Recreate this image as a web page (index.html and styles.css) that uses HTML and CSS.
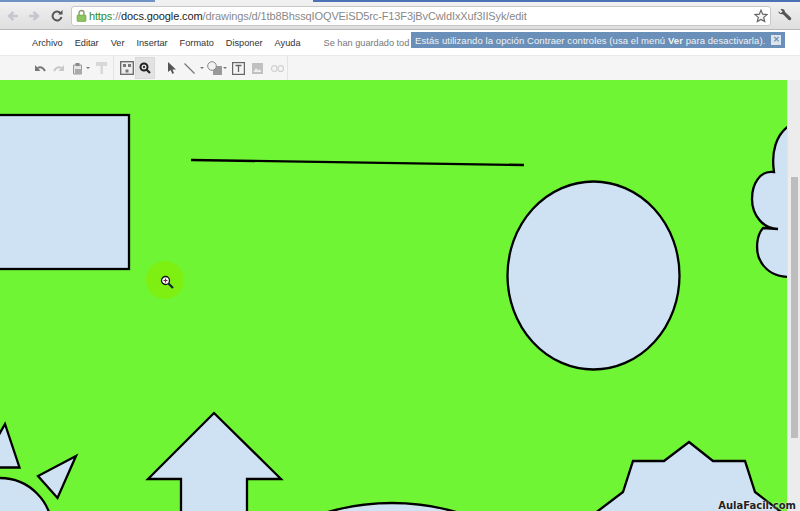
FILE: index.html
```html
<!doctype html>
<html lang="es">
    <head>
        <meta charset="UTF-8" />
        <meta name="viewport" content="width=device-width, initial-scale=1.0" />
        <title>Google Drawings</title>
        <link rel="stylesheet" href="styles.css">
    </head>
    <body>
        <div class="tabstrip">
            <div class="tab-dark tab-left"></div>
            <div class="tab-light"></div>
            <div class="tab-dark"></div>
        </div>

        <div class="browserbar">
            <svg class="nav-icon" width="12" height="12" viewBox="0 0 12 12"><path d="M11 6H3M6.5 2 2 6l4.5 4" fill="none" stroke="#c4c8cc" stroke-width="2.4"/></svg>
            <svg class="nav-icon nav-forward" width="12" height="12" viewBox="0 0 12 12"><path d="M1 6h8M5.5 2 10 6l-4.5 4" fill="none" stroke="#c4c8cc" stroke-width="2.4"/></svg>
            <svg class="nav-icon nav-reload" width="12" height="12" viewBox="0 0 12 12"><path d="M9.8 3.4A4.5 4.5 0 1 0 10.5 7" fill="none" stroke="#555" stroke-width="2"/><path d="M7 4.6h4.6V0z" fill="#555"/></svg>
            <div class="omnibox">
                <svg width="11" height="13" viewBox="0 0 11 13"><path d="M3 6V4a2.500 2.500 0 0 1 5 0v2" fill="none" stroke="#8a9a70" stroke-width="1.400"/><rect x="1" y="6" width="9" height="6.500" rx="1" fill="#8cc45e" stroke="#6d9a45" stroke-width=".6"/></svg>
                <span class="url"><span class="url-https">https</span><span class="url-path">://</span><span class="url-host">docs.google.com</span><span class="url-path">/drawings/d/1tb8BhssqIOQVEiSD5rc-F13F3jBvCwldIxXuf3IISyk/edit</span></span>
                <svg class="star" width="14" height="14" viewBox="0 0 14 14"><path d="M7 1.200 8.700 5.200l4.300.4-3.300 2.800 1 4.200L7 10.400 3.300 12.600l1-4.200L1 5.600l4.300-.4z" fill="#f4f4f4" stroke="#666" stroke-width="1.200"/></svg>
            </div>
            <svg class="wrench" width="15" height="15" viewBox="0 0 15 15"><path d="M1.500 3.200 3.800 5.300 5.600 3.600 3.500 1.400C5.500.3 8 1.600 8 4l5.800 5.500a1.500 1.500 0 0 1-2.300 2.300L6 6.200C3.500 6.500 1 5.500 1.500 3.200z" fill="#555"/></svg>
        </div>

        <div class="menubar">
            <span class="menu-item">Archivo</span>
            <span class="menu-item">Editar</span>
            <span class="menu-item">Ver</span>
            <span class="menu-item">Insertar</span>
            <span class="menu-item">Formato</span>
            <span class="menu-item">Disponer</span>
            <span class="menu-item">Ayuda</span>
            <span class="save-status">Se han guardado tod</span>
        </div>

        <div class="notice">
            <span>Estás utilizando la opción Contraer controles (usa el menú <b>Ver</b> para desactivarla).</span>
            <span class="notice-close">✕</span>
        </div>

        <div class="toolbar">
            <svg class="tool tool-undo" width="12" height="10" viewBox="0 0 12 10"><path d="M11 8C9 4 6 3.500 3.500 5" fill="none" stroke="#777" stroke-width="2"/><path d="M1 2v6h5.500z" fill="#777"/></svg>
            <svg class="tool tool-redo" width="12" height="10" viewBox="0 0 12 10"><path d="M1 8c2-4 5-4.500 7.500-3" fill="none" stroke="#c8c8c8" stroke-width="2"/><path d="M11 2v6H5.500z" fill="#c8c8c8"/></svg>
            <svg class="tool tool-paste" width="11" height="13" viewBox="0 0 11 13"><path d="M1.500 3h8v9h-8z" fill="#e4e4e4" stroke="#999"/><rect x="3.500" y="1" width="4" height="3" fill="#888"/><rect x="3" y="7" width="7" height="5" fill="#aaa"/></svg>
            <span class="caret"></span>
            <svg class="tool tool-roller" width="11" height="12" viewBox="0 0 11 12"><rect x="0" y="0" width="11" height="4" fill="#d8d8d8"/><rect x="4.500" y="4" width="2.500" height="8" fill="#d8d8d8"/></svg>
            <span class="tool-divider"></span>
            <svg class="tool tool-fit" width="14" height="14" viewBox="0 0 14 14"><rect x=".7" y=".7" width="12.600" height="12.600" fill="#eee" stroke="#666" stroke-width="1.300"/><path d="M3 3h3v3H3zM8 3h3v3H8zM5.500 8.500h3v3h-3z" fill="#777"/></svg>
            <span class="tool-active">
                <svg width="12" height="12" viewBox="0 0 12 12"><circle cx="5" cy="5" r="3.500" fill="#eee" stroke="#222" stroke-width="2"/><path d="M7.500 7.500 11 11" stroke="#222" stroke-width="2.200"/><circle cx="5" cy="5" r="1.200" fill="#333"/></svg>
            </span>
            <svg class="tool tool-select" width="8" height="12" viewBox="0 0 8 12"><path d="M0 0v10l2.500-2L4.500 12 6 11 4.500 7.500H8z" fill="#555"/></svg>
            <svg class="tool tool-line" width="11" height="11" viewBox="0 0 11 11"><path d="M.5.500l10 10" stroke="#777" stroke-width="1.200"/></svg>
            <span class="caret caret-line"></span>
            <svg class="tool tool-shape" width="15" height="14" viewBox="0 0 15 14"><rect x="6" y="5" width="9" height="9" fill="#999"/><circle cx="5" cy="5" r="4.300" fill="#f2f2f2" stroke="#888"/></svg>
            <span class="caret caret-shape"></span>
            <svg class="tool tool-text" width="13" height="13" viewBox="0 0 13 13"><rect x=".6" y=".6" width="11.800" height="11.800" fill="#f4f4f4" stroke="#666" stroke-width="1.200"/><path d="M3.500 3.500h6M6.500 3.500v6.500" stroke="#666" stroke-width="1.300" fill="none"/></svg>
            <svg class="tool tool-image" width="11" height="11" viewBox="0 0 11 11"><rect width="11" height="11" fill="#c0c0c0"/><path d="M1.500 9 4 5l2 2.500L7.500 6 9.500 9z" fill="#eee"/></svg>
            <svg class="tool tool-link" width="13" height="7" viewBox="0 0 13 7"><rect x=".6" y=".6" width="5.300" height="5.800" rx="2.500" fill="none" stroke="#d0d0d0" stroke-width="1.200"/><rect x="7.100" y=".6" width="5.300" height="5.800" rx="2.500" fill="none" stroke="#d0d0d0" stroke-width="1.200"/></svg>
            <span class="tool-divider tool-divider-end"></span>
        </div>

        <div class="workspace">
            <svg class="canvas" width="787" height="431" viewBox="0 80 787 431">
                <g fill="#cfe2f3" stroke="#000" stroke-width="2.300" stroke-linejoin="miter">
                    <rect x="-10" y="115" width="139" height="154"/>
                    <ellipse cx="593.500" cy="275.500" rx="86" ry="94"/>
                    <path d="M-4 440 5 424 19.500 467.500H-4z"/>
                    <path d="M76 456 38 476 57.500 498z"/>
                    <circle cx="0" cy="530" r="52"/>
                    <path d="M214 413 281 479H247V520H181V479H148z"/>
                    <ellipse cx="392" cy="597" rx="150" ry="94"/>
                    <path d="M689 442 713 461H745L755 492 785 515V530H594V514L623 492 633 461H664z"/>
                    <path d="M790 125C776 134 771 152 774 172 760 170 752 184 752 199 752 216 764 229 778 229L763 228C756 236 756 250 759 258 764 270 775 277 790 277z"/>
                </g>
                <path d="M191 160 524 165" stroke="#000" stroke-width="2.300" fill="none"/>
            </svg>

            <div class="cursor-halo">
                <svg width="14" height="14" viewBox="0 0 14 14"><circle cx="5.500" cy="5.500" r="4" fill="#fff" stroke="#111" stroke-width="1.300"/><path d="M3.500 5.500h4M5.500 3.500v4" stroke="#802040" stroke-width="1.200"/><path d="M8.500 8.500 13 13" stroke="#123" stroke-width="2.200"/></svg>
            </div>

            <div class="scrollbar">
                <div class="scroll-thumb"></div>
            </div>

            <span class="watermark">AulaFacil.com</span>
        </div>
    </body>
</html>
```

FILE: styles.css
```css
* {
    margin: 0;
    padding: 0;
    box-sizing: border-box;
}

body {
    font-family: "Liberation Sans", sans-serif;
    background: #fff;
    width: 800px;
    height: 511px;
    overflow: hidden;
    position: relative;
}

.tabstrip {
    display: flex;
    height: 2px;
    background: #dfe3e8;
}

.tab-dark {
    flex: 1;
    background: #4a72b5;
}

.tab-left {
    flex: 0 0 155px;
    background: #6f93c4;
}

.tab-light {
    flex: 0 0 158px;
    background: #f0f0f0;
}

.browserbar {
    display: flex;
    align-items: center;
    height: 28px;
    padding: 0 8px 0 7px;
    background: linear-gradient(#f1f1f1, #dedede);
    border-bottom: 1px solid #b8b8b8;
}

.nav-forward {
    margin-left: 9px;
}

.nav-reload {
    margin-left: 11px;
}

.omnibox {
    display: flex;
    align-items: center;
    gap: 3px;
    width: 702px;
    height: 20px;
    margin-left: 8px;
    padding-left: 4px;
    background: #fff;
    border: 1px solid #c8c8c8;
    border-radius: 3px;
}

.url {
    font-size: 11px;
    letter-spacing: -0.11px;
    margin-left: -1px;
    white-space: nowrap;
}

.url-https {
    color: #2e8b2e;
}

.url-host {
    color: #222;
}

.url-path {
    color: #888;
}

.star {
    margin-left: auto;
    margin-right: 2px;
}

.wrench {
    margin-left: 6px;
}

.menubar {
    display: flex;
    align-items: center;
    height: 25px;
    padding-left: 32px;
    background: #fff;
    font-size: 9.2px;
    color: #333;
    white-space: nowrap;
}

.menu-item {
    margin-right: 12px;
}

.save-status {
    margin-left: 11px;
    color: #777;
}

.notice {
    position: absolute;
    left: 411px;
    top: 32px;
    width: 374px;
    height: 16px;
    display: flex;
    align-items: center;
    justify-content: space-between;
    padding: 0 4px;
    background: #6a8fb8;
    color: #f2f2f2;
    font-size: 9.5px;
    letter-spacing: 0.08px;
    white-space: nowrap;
}

.notice-close {
    width: 10px;
    height: 10px;
    background: #dde4ee;
    color: #6a8fb8;
    font-size: 8px;
    font-weight: bold;
    line-height: 10px;
    text-align: center;
    letter-spacing: 0;
}

.toolbar {
    display: flex;
    align-items: center;
    height: 25px;
    padding-left: 34px;
    background: #f5f5f5;
    border-top: 1px solid #eaeaea;
}

.tool {
    flex: none;
}

.tool-redo {
    margin-left: 7px;
}

.tool-paste {
    margin-left: 7px;
}

.caret {
    flex: none;
    width: 0;
    height: 0;
    margin-left: 3px;
    border-left: 2px solid transparent;
    border-right: 2px solid transparent;
    border-top: 2px solid #777;
}

.tool-roller {
    margin-left: 6px;
}

.tool-divider {
    width: 1px;
    height: 24px;
    margin-left: 6px;
    background: #e4e4e4;
}

.tool-fit {
    margin-left: 6px;
}

.tool-active {
    display: flex;
    align-items: center;
    justify-content: center;
    width: 20px;
    height: 22px;
    margin-left: 1px;
    background: #e2e2e2;
    border: 1px solid #dadada;
}

.tool-select {
    margin-left: 13px;
}

.tool-line {
    margin-left: 8px;
}

.caret-line {
    margin-left: 5px;
}

.tool-shape {
    margin-left: 3px;
}

.caret-shape {
    margin-left: 1px;
}

.tool-text {
    margin-left: 5px;
}

.tool-image {
    margin-left: 7px;
}

.tool-link {
    margin-left: 8px;
}

.tool-divider-end {
    margin-left: 3px;
}

.workspace {
    position: relative;
    display: flex;
    height: 431px;
    background: #70f535;
}

.canvas {
    display: block;
    flex: 0 0 787px;
}

.cursor-halo {
    position: absolute;
    left: 146px;
    top: 181px;
    width: 38px;
    height: 38px;
    display: flex;
    align-items: center;
    justify-content: center;
    padding: 3px 0 0 3px;
    border-radius: 50%;
    background: #7df012;
}

.scrollbar {
    flex: 0 0 13px;
    padding-left: 3px;
    background: #ececec;
    border-left: 1px solid #e2e2e2;
}

.scroll-thumb {
    width: 7px;
    height: 261px;
    margin-top: 97px;
    background: #bdbdbd;
}

.watermark {
    position: absolute;
    right: 4px;
    bottom: 0;
    font-family: "DejaVu Sans", sans-serif;
    font-size: 10px;
    font-weight: bold;
    color: #222;
    text-shadow: 0 0 2px #fff;
}
```
